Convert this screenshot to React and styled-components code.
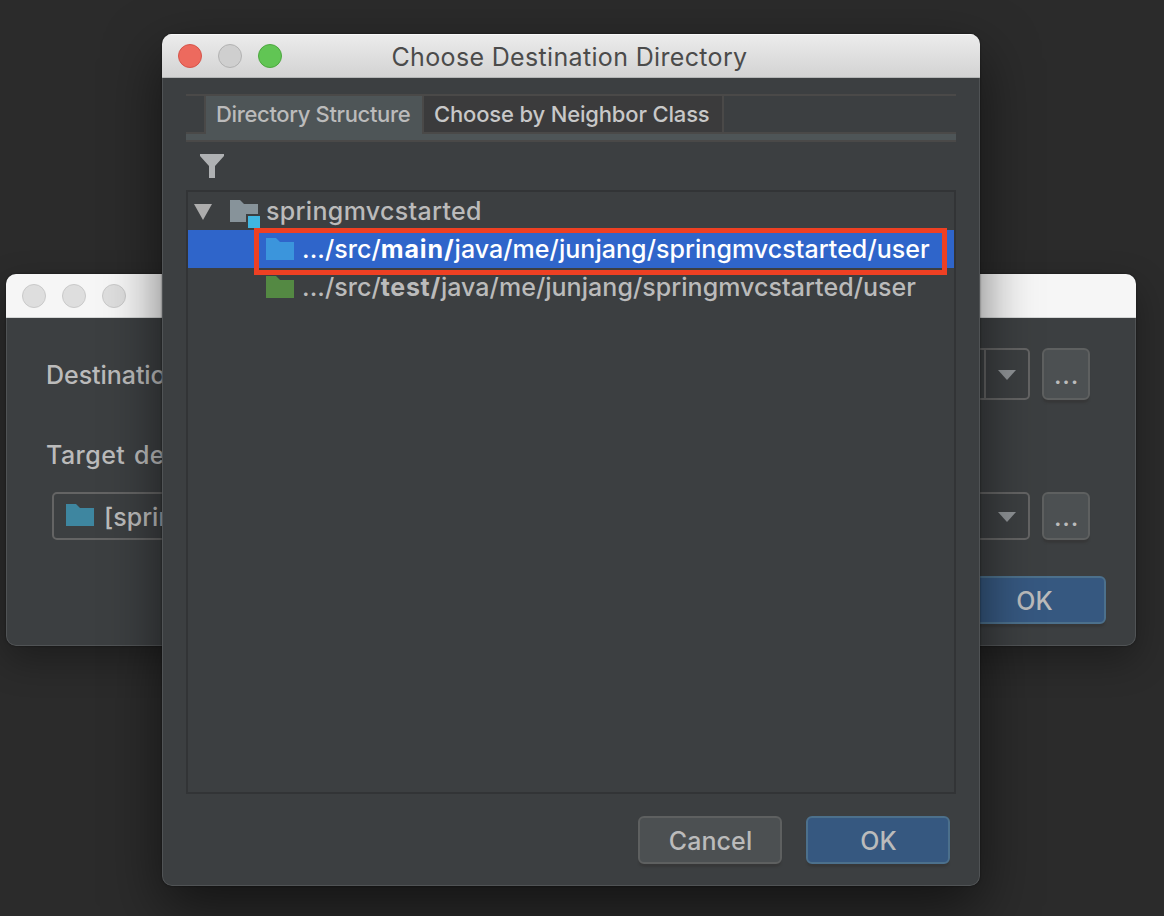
import React from 'react';
import styled, { createGlobalStyle, css } from 'styled-components';

const GlobalStyle = createGlobalStyle`
  * { box-sizing: border-box; }
  html, body { margin: 0; padding: 0; }
  body {
    width: 1164px;
    height: 916px;
    overflow: hidden;
    background: #2b2b2b;
    font-family: Inter, 'Liberation Sans', sans-serif;
    font-size: 25px;
    font-weight: 500;
    color: #bbbbbb;
  }
`;

const Desktop = styled.main`
  position: relative;
  width: 1164px;
  height: 916px;
  overflow: hidden;
  background: #2b2b2b;
`;

const Window = styled.section`
  position: absolute;
  left: ${(p) => p.$x}px;
  top: ${(p) => p.$y}px;
  width: ${(p) => p.$w}px;
  height: ${(p) => p.$h}px;
  display: flex;
  flex-direction: column;
  border-radius: 10px;
  overflow: hidden;
  background: #3c3f41;
  box-shadow: ${(p) =>
    p.$active
      ? '0 0 2px rgba(0,0,0,.6), 0 22px 56px rgba(0,0,0,.55)'
      : '0 0 2px rgba(0,0,0,.5), 0 14px 36px rgba(0,0,0,.32)'};
`;

const TitleBar = styled.header`
  flex: none;
  display: flex;
  align-items: center;
  height: 44px;
  padding: 0 16px;
  color: #4b4b4b;
  ${(p) =>
    p.$active
      ? css`
          background: linear-gradient(#ececec, #d3d3d3);
          border-bottom: 1px solid #b4b6b6;
          box-shadow: inset 0 1px 0 #f8f8f8;
        `
      : css`
          background: #f6f6f6;
          border-bottom: 1px solid #d4d6d6;
        `}
`;

const Lights = styled.div`
  display: flex;
  gap: 16px;
  width: 104px;
  flex: none;
`;

const Light = styled.span`
  width: 24px;
  height: 24px;
  border-radius: 50%;
  background: ${(p) => p.$fill};
  border: 1px solid ${(p) => p.$edge};
`;

const Title = styled.h1`
  flex: 1;
  margin: 0;
  padding: 3px 107px 0 0;
  text-align: center;
  white-space: nowrap;
  font-size: 25px;
  font-weight: 400;
  line-height: 43px;
  letter-spacing: ${(p) => p.$spacing}px;
`;

const Body = styled.div`
  flex: 1;
  display: flex;
  flex-direction: column;
  padding: ${(p) => p.$pad};
  border: 1px solid #505355;
  border-top: 0;
  border-radius: 0 0 10px 10px;
`;

const TabStrip = styled.nav`
  flex: none;
  display: flex;
  height: 48px;
  padding-left: 18px;
  border-top: 2px solid #4a4948;
  border-bottom: 2px solid #4a4948;
  background: linear-gradient(
    to bottom,
    transparent 36px,
    #4a4948 36px,
    #4a4948 38px,
    #4e5557 38px
  );
`;

const Tab = styled.div`
  height: ${(p) => (p.$selected ? 38 : 36)}px;
  width: ${(p) => p.$w}px;
  padding-left: 10px;
  border-left: 2px solid #4a4948;
  border-right: ${(p) => (p.$last ? '2px solid #4a4948' : '0')};
  background: ${(p) => (p.$selected ? '#4e5557' : '#3b3b3c')};
  color: ${(p) => (p.$selected ? '#bbbbbb' : '#c8c8c8')};
  font-size: 22px;
  line-height: 36px;
  letter-spacing: ${(p) => p.$spacing}px;
  white-space: nowrap;
`;

const Toolbar = styled.div`
  flex: none;
  height: 48px;
  padding: 12px 14px;
  line-height: 0;
`;

const Tree = styled.div`
  flex: none;
  height: 604px;
  border: 2px solid #323436;
`;

const TreeRow = styled.div`
  display: flex;
  align-items: center;
  position: relative;
  height: 38px;
  padding-left: ${(p) => p.$indent}px;
  background: ${(p) => (p.$selected ? '#2f65ca' : 'transparent')};
  color: ${(p) => (p.$selected ? '#ffffff' : '#bbbbbb')};
  line-height: 38px;
  white-space: nowrap;
`;

const RowLabel = styled.span`
  margin-left: ${(p) => p.$gap}px;
  letter-spacing: ${(p) => p.$spacing}px;
  b {
    font-weight: 700;
    letter-spacing: ${(p) => p.$strong || 0}px;
  }
`;

const Highlight = styled.div`
  position: absolute;
  left: 66px;
  top: -2px;
  width: 693px;
  height: 47px;
  border: 5px solid #ee4023;
  z-index: 1;
`;

const ButtonRow = styled.footer`
  display: flex;
  justify-content: flex-end;
  gap: 24px;
  padding: ${(p) => p.$pad};
`;

const Button = styled.button`
  flex: none;
  width: ${(p) => p.$w || 144}px;
  height: ${(p) => p.$h || 48}px;
  padding: 2px 0 0 1px;
  border: 2px solid ${(p) => (p.$primary ? '#4c708c' : '#5e6060')};
  border-radius: 6px;
  background: ${(p) => (p.$primary ? '#365880' : '#4c5052')};
  box-shadow: 0 4px 2px -1px rgba(54, 54, 54, 0.75);
  color: #bbbbbb;
  font-family: inherit;
  font-size: 25px;
  font-weight: 500;
  line-height: 42px;
  letter-spacing: ${(p) => p.$spacing || 0}px;
`;

const MoreButton = styled(Button)`
  padding-top: ${(p) => p.$drop}px;
  letter-spacing: 0.8px;
`;

const FieldLabel = styled.label`
  flex: none;
  height: 40px;
  line-height: 42px;
  padding-left: 39px;
  letter-spacing: ${(p) => p.$spacing}px;
  white-space: nowrap;
`;

const FieldLine = styled.div`
  display: flex;
  align-items: center;
`;

const FieldLineEnd = styled.div`
  flex: 1;
  display: flex;
  justify-content: flex-end;
  gap: 12px;
  padding-right: 45px;
`;

const TargetLabel = styled(FieldLabel)`
  margin-top: 34px;
  word-spacing: 1.5px;
`;

const TargetLine = styled.div`
  display: flex;
  gap: 12px;
  padding: 18px 0 0 45px;
`;

const Combo = styled.div`
  flex: none;
  display: flex;
  align-items: center;
  justify-content: space-between;
  width: ${(p) => p.$w}px;
  height: ${(p) => p.$h}px;
  padding-left: 12px;
  border: 2px solid #646464;
  border-radius: 5px;
`;

const ComboValue = styled.div`
  display: flex;
  align-items: center;
  line-height: 44px;
  white-space: nowrap;
  svg {
    margin-top: -1px;
  }
`;

const ComboText = styled.span`
  margin-left: 10px;
  padding-top: 1px;
`;

const ComboArrow = styled.div`
  display: flex;
  align-items: center;
  width: 44px;
  height: 100%;
  padding: 2px 0 0 ${(p) => (p.$divided ? 12 : 14)}px;
  border-left: ${(p) => (p.$divided ? '2px solid #646464' : '0')};
`;

const FolderSlot = styled.span`
  display: block;
  flex: none;
  width: ${(p) => (p.$wide ? 30 : 28)}px;
  height: 22px;
  line-height: 0;
  svg {
    display: block;
    overflow: visible;
  }
`;

const Expander = styled.svg`
  flex: none;
  margin: 2px 18px 0 0;
`;

const Folder = ({ color, badge }) => (
  <svg width="30" height="28" viewBox="0 0 30 28">
    <path
      fill={color}
      d={badge ? 'M0 0H10L14 4H28V14H16V22H0Z' : 'M0 0H10L14 4H28V22H0Z'}
    />
    {badge && <path fill="#40b6e0" d="M18 16H30V28H18Z" />}
  </svg>
);

const Caret = () => (
  <svg width="18" height="10" viewBox="0 0 18 10">
    <path fill="#8f9396" d="M0 0H18L9 10Z" />
  </svg>
);

export default function App() {
  return (
    <>
      <GlobalStyle />
      <Desktop>
        <Window $x={6} $y={274} $w={1130} $h={372}>
          <TitleBar>
            <Lights>
              <Light $fill="#dedede" $edge="#c9c9c9" />
              <Light $fill="#dedede" $edge="#c9c9c9" />
              <Light $fill="#dedede" $edge="#c9c9c9" />
            </Lights>
          </TitleBar>
          <Body $pad="30px 0 0">
            <FieldLine>
              <FieldLabel $spacing={-0.05}>Destination</FieldLabel>
              <FieldLineEnd>
                <Combo $w={800} $h={52}>
                  <span />
                  <ComboArrow $divided>
                    <Caret />
                  </ComboArrow>
                </Combo>
                <MoreButton $w={48} $h={52} $drop={2}>...</MoreButton>
              </FieldLineEnd>
            </FieldLine>
            <TargetLabel $spacing={0.45}>Target destination</TargetLabel>
            <TargetLine>
              <Combo $w={978} $h={48}>
                <ComboValue>
                  <FolderSlot>
                    <Folder color="#3e86a0" />
                  </FolderSlot>
                  <ComboText>[springmvcstarted]</ComboText>
                </ComboValue>
                <ComboArrow>
                  <Caret />
                </ComboArrow>
              </Combo>
              <MoreButton $w={48} $h={48} $drop={2}>...</MoreButton>
            </TargetLine>
            <ButtonRow $pad="36px 29px 0 0">
              <Button $primary>OK</Button>
            </ButtonRow>
          </Body>
        </Window>

        <Window $active $x={162} $y={34} $w={818} $h={852}>
          <TitleBar $active>
            <Lights>
              <Light $fill="#ed6a5e" $edge="#d5544a" />
              <Light $fill="#cfcfcf" $edge="#b2b2b2" />
              <Light $fill="#61c554" $edge="#4da73f" />
            </Lights>
            <Title $spacing={0.34}>Choose Destination Directory</Title>
          </TitleBar>
          <Body $pad="16px 23px 0">
            <TabStrip>
              <Tab $selected $w={218} $spacing={-0.35}>Directory Structure</Tab>
              <Tab $last $w={302} $spacing={-0.16}>Choose by Neighbor Class</Tab>
            </TabStrip>
            <Toolbar>
              <svg width="24" height="24" viewBox="0 0 24 24">
                <path fill="#afb1b3" d="M0 0H24V2L15 12V24H9V12L0 2Z" />
              </svg>
            </Toolbar>
            <Tree>
              <TreeRow $indent={6}>
                <Expander width="18" height="16" viewBox="0 0 18 16">
                  <path fill="#adadad" d="M0 0H18L9 16Z" />
                </Expander>
                <FolderSlot $wide>
                  <Folder color="#87939a" badge />
                </FolderSlot>
                <RowLabel $gap={6} $spacing={0.32}>springmvcstarted</RowLabel>
              </TreeRow>
              <TreeRow $selected $indent={78}>
                <FolderSlot>
                  <Folder color="#3b95dc" />
                </FolderSlot>
                <RowLabel $gap={8} $spacing={0.05} $strong={0.9}>
                  .../src/<b>main/</b>java/me/junjang/springmvcstarted/user
                </RowLabel>
                <Highlight />
              </TreeRow>
              <TreeRow $indent={78}>
                <FolderSlot>
                  <Folder color="#548943" />
                </FolderSlot>
                <RowLabel $gap={8} $spacing={0.05} $strong={0.7}>
                  .../src/<b>test/</b>java/me/junjang/springmvcstarted/user
                </RowLabel>
              </TreeRow>
            </Tree>
            <ButtonRow $pad="22px 6px 0 0">
              <Button $spacing={0.1}>Cancel</Button>
              <Button $primary>OK</Button>
            </ButtonRow>
          </Body>
        </Window>
      </Desktop>
    </>
  );
}
